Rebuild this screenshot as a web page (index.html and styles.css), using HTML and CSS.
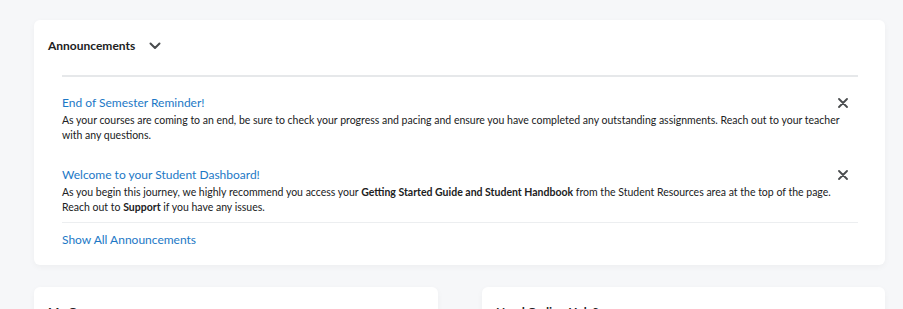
FILE: index.html
```html
<!DOCTYPE html>
<html lang="en">
<head>
  <meta charset="UTF-8">
  <title>Student Dashboard</title>
  <link rel="stylesheet" href="styles.css">
</head>
<body>

  <div class="page">

    <!-- Announcements widget -->
    <div class="card announcements">
      <div class="card-head">
        <h2>Announcements</h2>
        <svg class="chevron" width="12" height="8" viewBox="0 0 12 8">
          <path d="M1.5 1.5 L6 6 L10.5 1.5" fill="none" stroke="#494c4e" stroke-width="2" stroke-linecap="round" stroke-linejoin="round"/>
        </svg>
      </div>

      <div class="ann-list">
        <div class="ann-item">
          <div class="ann-top">
            <a class="ann-title" href="#">End of Semester Reminder!</a>
            <button class="dismiss" aria-label="Dismiss">
              <svg width="10" height="10" viewBox="0 0 10 10">
                <path d="M1 1 L9 9 M9 1 L1 9" stroke="#494c4e" stroke-width="1.8" stroke-linecap="round"/>
              </svg>
            </button>
          </div>
          <p>As your courses are coming to an end, be sure to check your progress and pacing and ensure you have completed any outstanding assignments. Reach out to your teacher with any questions.</p>
        </div>

        <div class="ann-item">
          <div class="ann-top">
            <a class="ann-title" href="#">Welcome to your Student Dashboard!</a>
            <button class="dismiss" aria-label="Dismiss">
              <svg width="10" height="10" viewBox="0 0 10 10">
                <path d="M1 1 L9 9 M9 1 L1 9" stroke="#494c4e" stroke-width="1.8" stroke-linecap="round"/>
              </svg>
            </button>
          </div>
          <p>As you begin this journey, we highly recommend you access your <b>Getting Started Guide and Student Handbook</b> from the Student Resources area at the top of the page. Reach out to <b>Support</b> if you have any issues.</p>
        </div>

        <a class="show-all" href="#">Show All Announcements</a>
      </div>
    </div>

    <!-- Lower widgets -->
    <div class="columns">
      <div class="card small">
        <h2>My Courses</h2>
      </div>
      <div class="card small">
        <h2>Need Coding Help?</h2>
      </div>
    </div>

  </div>

</body>
</html>
```

FILE: styles.css
```css
/* General */
body {
  margin: 0;
  background-color: #f6f7f9;
  font-family: Lato, "Open Sans", Arial, sans-serif;
  color: #202122;
  overflow: hidden;
}

.page {
  padding: 20px 18px 0 34px;
}

/* Cards */
.card {
  background-color: #fff;
  border-radius: 6px;
  box-shadow: 0 2px 6px rgba(0, 0, 0, 0.04);
}

h2 {
  margin: 0;
  font-size: 12px;
  font-weight: bold;
  color: #202122;
}

/* Announcements */
.announcements {
  padding: 17px 27px 18px 14px;
}

.card-head {
  display: flex;
  align-items: center;
  gap: 14px;
  height: 16px;
}

.chevron {
  margin-top: 2px;
}

.ann-list {
  margin: 22px 0 0 14px;
  border-top: 2px solid #e6e8ea;
  padding-top: 18px;
}

.ann-item {
  margin-bottom: 24px;
}

.ann-item + .ann-item {
  margin-bottom: 0;
  padding-bottom: 7px;
  border-bottom: 1px solid #eceef0;
}

.ann-top {
  display: flex;
  justify-content: space-between;
  align-items: center;
}

.ann-title,
.show-all {
  font-size: 12px;
  color: #1c78c6;
  text-decoration: none;
}

.dismiss {
  background: none;
  border: none;
  padding: 0;
  margin-right: 10px;
  width: 10px;
  height: 10px;
  display: flex;
}

.ann-item p {
  margin: 3px 0 0;
  font-size: 10.5px;
  line-height: 15px;
  color: #202122;
}

.show-all {
  display: block;
  margin-top: 9px;
}

/* Lower columns */
.columns {
  display: grid;
  grid-template-columns: 404px 403px;
  gap: 44px;
  margin-top: 22px;
}

.card.small {
  height: 80px;
  padding: 17px 14px;
}
```
